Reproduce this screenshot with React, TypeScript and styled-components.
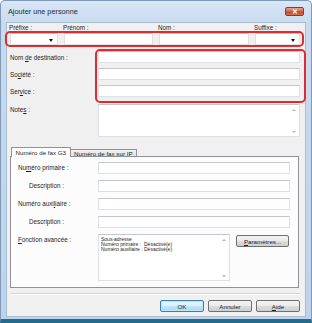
import React from 'react'
import styled, { createGlobalStyle, css } from 'styled-components'

const GlobalStyle = createGlobalStyle`
  html, body { margin: 0; padding: 0; background: #ffffff; }
  body { font-family: "Liberation Sans", Arial, sans-serif; color: #1c1c1c; }
  * { box-sizing: border-box; }
`

const Window = styled.div`
  width: 312px;
  height: 323px;
  display: flex;
  flex-direction: column;
  background: linear-gradient(to bottom, #d9e7f6 0px, #c9dbef 22px, #bcd3eb 100%);
  border: 1px solid #7f98b3;
  border-bottom: 4px solid #27698a;
  border-radius: 5px 5px 0 0;
  overflow: hidden;
`

const TitleBar = styled.div`
  height: 21px;
  display: flex;
  align-items: center;
  justify-content: space-between;
  padding: 0 7px 0 7px;
`

const Title = styled.span`
  font-size: 7.3px;
  color: #1e2a36;
`

const CloseButton = styled.div`
  width: 19px;
  height: 9px;
  margin-top: -1px;
  border-radius: 2px;
  border: 1px solid #8b3b2c;
  background: linear-gradient(to bottom, #e8a493 0%, #d46a52 45%, #c2442a 55%, #d46d50 100%);
  display: flex;
  align-items: center;
  justify-content: center;
  color: #ffffff;
  font-size: 7px;
  font-weight: bold;
  line-height: 1;
`

const Client = styled.div`
  flex: 1;
  margin: 0 5px 2px 5px;
  background: #f0f0f0;
  border: 1px solid #a9bdd2;
  display: flex;
  flex-direction: column;
  padding: 1px 5px 4px 3px;
  font-size: 6.3px;
`

const Key = styled.u`
  text-decoration: underline;
`

const redBox = css`
  border: 2px solid #e12a2e;
  border-radius: 5px;
`

const NameGrid = styled.div`
  display: grid;
  grid-template-columns: 48px 89px 90px 45px;
  column-gap: 6px;
`

const NameLabels = styled(NameGrid)`
  height: 7px;
  line-height: 7px;
  margin-left: -1px;
`

const NameBox = styled(NameGrid)`
  ${redBox};
  margin: 0 -4px 0 -5px;
  padding: 0 2px 0 3px;
`

const fieldBorder = css`
  background: #ffffff;
  border: 1px solid #dde1e6;
  border-top-color: #c4c8ce;
`

const Input = styled.div`
  ${fieldBorder};
  height: 12px;
`

const Combo = styled.div`
  ${fieldBorder};
  height: 12px;
  position: relative;

  &::after {
    content: '';
    position: absolute;
    right: 4px;
    top: 4.5px;
    border-left: 2.5px solid transparent;
    border-right: 2.5px solid transparent;
    border-top: 3px solid #111111;
  }
`

const DestRow = styled.div`
  display: flex;
  margin-top: 2px;
`

const LabelColumn = styled.div`
  width: 85px;
  display: flex;
  flex-direction: column;
  gap: 5px;
  padding-top: 2px;
`

const RowLabel = styled.div`
  height: 12px;
  line-height: 13px;
`

const DestBox = styled.div`
  ${redBox};
  flex: 1;
  margin-right: -6px;
  padding: 0 4px 4px 1px;
  display: flex;
  flex-direction: column;
  gap: 5px;
`

const NotesRow = styled.div`
  display: flex;
  margin-top: 1px;
`

const NotesLabel = styled.div`
  width: 88px;
  line-height: 12px;
`

const ScrollField = styled.div<{ $h: number }>`
  ${fieldBorder};
  height: ${p => p.$h}px;
  position: relative;
  flex: 1;
`

const ScrollArrow = styled.span<{ $down?: boolean }>`
  position: absolute;
  right: 3px;
  ${p => (p.$down ? 'bottom: 3px;' : 'top: 4px;')}
  border-left: 2px solid transparent;
  border-right: 2px solid transparent;
  ${p => (p.$down ? 'border-top: 2px solid #b4b4b4;' : 'border-bottom: 2px solid #b4b4b4;')}
`

const TabStrip = styled.div`
  display: flex;
  align-items: flex-end;
  margin-top: 10px;
  padding-left: 1px;
  height: 9px;
`

const Tab = styled.div<{ $active?: boolean }>`
  border: 1px solid #8e9197;
  border-bottom: none;
  padding: 0 3.5px;
  font-size: 6.2px;
  white-space: nowrap;
  ${p =>
    p.$active
      ? css`
          height: 10px;
          line-height: 9px;
          background: #ffffff;
          margin-bottom: -1px;
          position: relative;
          z-index: 1;
        `
      : css`
          height: 7px;
          line-height: 7px;
          border-left: none;
          background: linear-gradient(to bottom, #f3f3f3, #e1e1e1);
        `}
`

const Panel = styled.div`
  border: 1px solid #8e9197;
  background: #fcfcfc;
  margin-right: 1px;
  padding: 5px 8px 6px 7px;
  display: flex;
  flex-direction: column;
  gap: 6px;
`

const PanelRow = styled.div`
  display: flex;
  align-items: flex-start;
`

const PanelLabel = styled.div<{ $indent?: boolean }>`
  width: 80px;
  padding-left: ${p => (p.$indent ? 11 : 0)}px;
  line-height: 12px;
`

const PanelInput = styled(Input)`
  flex: 1;
`

const ListBox = styled.div`
  ${fieldBorder};
  width: 132px;
  height: 47px;
  position: relative;
  padding: 2px 0 0 2px;
  line-height: 5.2px;
  font-size: 5px;
`

const ListLine = styled.div`
  display: flex;
  white-space: nowrap;
`

const ListKey = styled.span`
  width: 43px;
  flex-shrink: 0;
`

const pushButton = css`
  height: 12px;
  border: 1px solid #707070;
  border-radius: 2px;
  background: linear-gradient(to bottom, #f3f3f3 0%, #ebebeb 50%, #dddddd 51%, #cfcfcf 100%);
  display: flex;
  align-items: center;
  justify-content: center;
  font-size: 6.2px;
`

const SideButton = styled.div`
  ${pushButton};
  width: 53px;
  margin: 1px 0 0 6px;
`

const Separator = styled.div`
  height: 2px;
  margin: 5px 0 0 0;
  border-top: 1px solid #d3d3d3;
  border-bottom: 1px solid #ffffff;
`

const ButtonBar = styled.div`
  display: flex;
  justify-content: flex-end;
  gap: 4px;
  margin-top: 5px;
`

const DialogButton = styled.div<{ $default?: boolean }>`
  ${pushButton};
  width: 44px;
  ${p =>
    p.$default &&
    css`
      border-color: #3c7fb1;
      box-shadow: inset 0 0 0 1px #bfe3f6;
      background: linear-gradient(to bottom, #eaf6fd 0%, #d9f0fc 50%, #bee6fd 51%, #a7d9f5 100%);
    `}
`

const App: React.FC = () => {
  return (
    <>
      <GlobalStyle />
      <Window>
        <TitleBar>
          <Title>Ajouter une personne</Title>
          <CloseButton>✕</CloseButton>
        </TitleBar>
        <Client>
          <NameLabels>
            <span>Pré<Key>f</Key>ixe :</span>
            <span>P<Key>r</Key>énom :</span>
            <span>N<Key>o</Key>m :</span>
            <span>S<Key>u</Key>ffixe :</span>
          </NameLabels>
          <NameBox>
            <Combo />
            <Input />
            <Input />
            <Combo />
          </NameBox>

          <DestRow>
            <LabelColumn>
              <RowLabel>Nom <Key>d</Key>e destination :</RowLabel>
              <RowLabel>So<Key>c</Key>iété :</RowLabel>
              <RowLabel>Ser<Key>v</Key>ice :</RowLabel>
            </LabelColumn>
            <DestBox>
              <Input />
              <Input />
              <Input />
            </DestBox>
          </DestRow>

          <NotesRow>
            <NotesLabel>Note<Key>s</Key> :</NotesLabel>
            <ScrollField $h={33}>
              <ScrollArrow />
              <ScrollArrow $down />
            </ScrollField>
          </NotesRow>

          <TabStrip>
            <Tab $active>Numéro de fax G3</Tab>
            <Tab>Numéro de fax sur IP</Tab>
          </TabStrip>
          <Panel>
            <PanelRow>
              <PanelLabel>Nu<Key>m</Key>éro primaire :</PanelLabel>
              <PanelInput />
            </PanelRow>
            <PanelRow>
              <PanelLabel $indent>Description :</PanelLabel>
              <PanelInput />
            </PanelRow>
            <PanelRow>
              <PanelLabel>Numéro auxi<Key>l</Key>iaire :</PanelLabel>
              <PanelInput />
            </PanelRow>
            <PanelRow>
              <PanelLabel $indent>Description :</PanelLabel>
              <PanelInput />
            </PanelRow>
            <PanelRow>
              <PanelLabel><Key>F</Key>onction avancée :</PanelLabel>
              <ListBox>
                <ListLine>Sous-adresse</ListLine>
                <ListLine><ListKey>Numéro primaire :</ListKey>Désactivé(e)</ListLine>
                <ListLine><ListKey>Numéro auxiliaire :</ListKey>Désactivé(e)</ListLine>
                <ScrollArrow />
                <ScrollArrow $down />
              </ListBox>
              <SideButton><Key>P</Key>aramètres...</SideButton>
            </PanelRow>
          </Panel>

          <Separator />
          <ButtonBar>
            <DialogButton $default>OK</DialogButton>
            <DialogButton>Annuler</DialogButton>
            <DialogButton><Key>A</Key>ide</DialogButton>
          </ButtonBar>
        </Client>
      </Window>
    </>
  )
}

export default App
